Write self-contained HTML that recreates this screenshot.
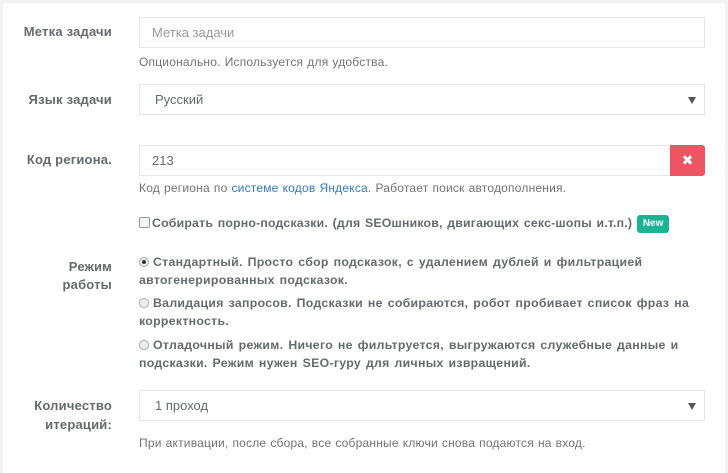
<!DOCTYPE html>
<html><head><meta charset="utf-8"><style>
*{margin:0;padding:0;box-sizing:border-box}
body{width:728px;height:464px;background:#f3f3f4;font-family:"Liberation Sans","DejaVu Sans",sans-serif;color:#676a6c;position:relative;overflow:hidden}
.panel{position:absolute;left:3px;top:3px;width:722px;height:470px;background:#fff}
.a{position:absolute}
.lbl{font-weight:bold;font-size:13px;text-align:right;width:112px;left:0;line-height:18px;letter-spacing:0.2px}
.inp{left:139px;width:566px;height:31px;border:1px solid #e5e6e7;font-size:13px;padding:0 12px;line-height:29px;color:#676a6c}
.help{left:139px;font-size:12px;color:#737373;letter-spacing:0.2px;word-spacing:0.5px}
.arrow{position:absolute;right:8px;top:12px;width:0;height:0;border-left:4px solid transparent;border-right:4px solid transparent;border-top:7px solid #555}
.opt{left:139px;font-size:12.3px;font-weight:bold;line-height:18px;width:560px;letter-spacing:0.3px;word-spacing:1.2px}
.rad{display:inline-block;width:10px;height:10px;border:1px solid #aaa;border-radius:50%;background:#eee;vertical-align:-1px;margin-right:4px;position:relative}
.rad.on::after{content:"";position:absolute;left:2px;top:2px;width:4px;height:4px;border-radius:50%;background:#333}
</style></head><body>
<div class="panel"></div>
<div class="a lbl" style="top:23px">Метка задачи</div>
<div class="a inp" style="top:17px;color:#999">Метка задачи</div>
<div class="a help" style="top:55px">Опционально. Используется для удобства.</div>
<div class="a lbl" style="top:91px">Язык задачи</div>
<div class="a inp" style="top:84px;padding-left:15px">Русский<span class="arrow"></span></div>
<div class="a lbl" style="top:151px">Код региона.</div>
<div class="a inp" style="top:145px;width:532px">213</div>
<div class="a" style="left:670px;top:145px;width:35px;height:31px;background:#ed5565;border-radius:0 3px 3px 0;color:#fff;font-weight:bold;font-size:14px;text-align:center;line-height:31px">✖</div>
<div class="a help" style="top:181px">Код региона по <span style="color:#337ab7">системе кодов Яндекса</span>. Работает поиск автодополнения.</div>
<div class="a opt" style="top:214px;left:139px;width:585px;letter-spacing:0.2px;word-spacing:1px"><span style="display:inline-block;width:11px;height:11px;border:1px solid #999;border-radius:2px;background:#f4f4f4;vertical-align:-1px;margin-right:2px"></span>Собирать порно-подсказки. (для SEOшников, двигающих секс-шопы и.т.п.) <span style="display:inline-block;background:#1ab394;color:#fff;font-size:10px;padding:0 6px;border-radius:3px;line-height:18px;vertical-align:1px;word-spacing:0;letter-spacing:0">New</span></div>
<div class="a lbl" style="top:258px">Режим<br>работы</div>
<div class="a opt" style="top:253px"><span class="rad on"></span>Стандартный. Просто сбор подсказок, с удалением дублей и фильтрацией автогенерированных подсказок.</div>
<div class="a opt" style="top:294px"><span class="rad"></span>Валидация запросов. Подсказки не собираются, робот пробивает список фраз на корректность.</div>
<div class="a opt" style="top:336px"><span class="rad"></span>Отладочный режим. Ничего не фильтруется, выгружаются служебные данные и подсказки. Режим нужен SEO-гуру для личных извращений.</div>
<div class="a lbl" style="top:396px;line-height:19px">Количество<br>итераций:</div>
<div class="a inp" style="top:390px;padding-left:15px">1 проход<span class="arrow"></span></div>
<div class="a help" style="top:436px">При активации, после сбора, все собранные ключи снова подаются на вход.</div>
</body></html>
